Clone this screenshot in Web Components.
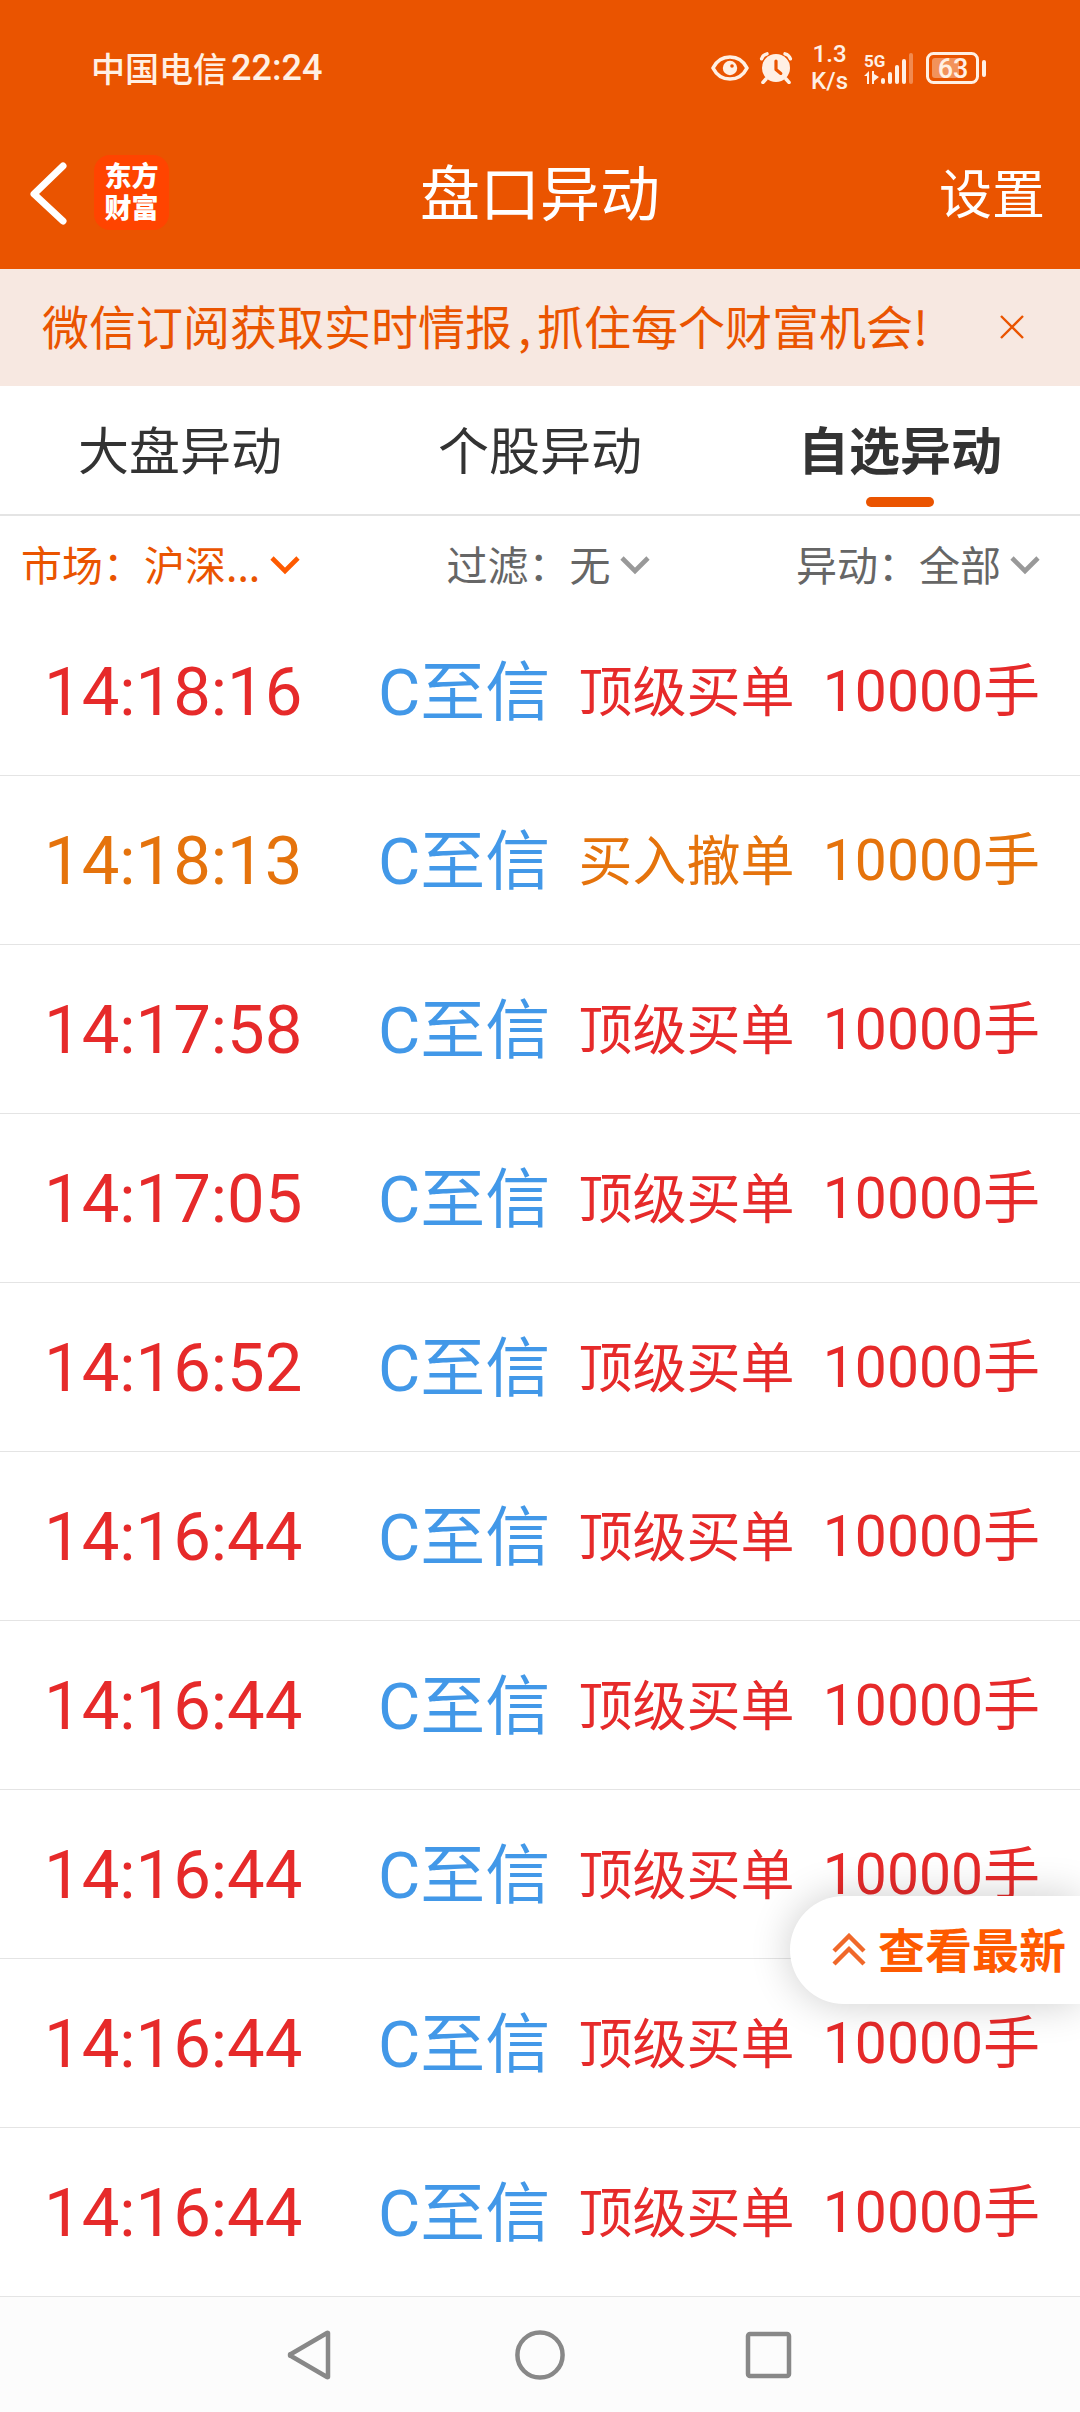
<!DOCTYPE html>
<html lang="zh-CN">
<head>
<meta charset="UTF-8">
<meta name="viewport" content="width=device-width, initial-scale=1">
<title>盘口异动</title>
<style>
    :root {
        --brand: #ea5400;
        --brand-bright: #fe5a00;
        --up: #e62a2a;
        --cancel: #e5730c;
        --link: #4298e8;
        --line: #e4e4e4;
        --text: #333;
        --text-muted: #666;
    }

    body {
        margin: 0;
        background: #fff;
        color: var(--text);
        font-family: "Noto Sans CJK SC", "Noto Sans", sans-serif;
    }
</style>
</head>
<body>
<quote-page>
    <status-bar carrier="中国电信" time="22:24" battery="63"></status-bar>
    <app-header heading="盘口异动"></app-header>
    <promo-banner>微信订阅获取实时情报<span class="comma">,</span>抓住每个财富机会!</promo-banner>
    <tab-bar tabs="大盘异动,个股异动,自选异动" selected="2"></tab-bar>
    <filter-bar>
        <filter-select label="市场：" value="沪深..." active></filter-select>
        <filter-select label="过滤：" value="无"></filter-select>
        <filter-select label="异动：" value="全部"></filter-select>
    </filter-bar>
    <change-list></change-list>
    <latest-button slot="floating">查看最新</latest-button>
    <system-nav slot="footer"></system-nav>
</quote-page>

<script>
class QuotePage extends HTMLElement {
    constructor() {
        super();
        this.attachShadow({ mode: 'open' });
        this.shadowRoot.innerHTML = `
            <style>
                :host {
                    display: flex;
                    flex-direction: column;
                    min-height: 100vh;
                }

                main {
                    position: relative;
                    flex: 1;
                    overflow: hidden;
                }

                ::slotted(latest-button) {
                    position: absolute;
                    right: 0;
                    bottom: 293px;
                }
            </style>
            <main>
                <slot></slot>
                <slot name="floating"></slot>
            </main>
            <slot name="footer"></slot>
        `;
    }
}

class StatusBar extends HTMLElement {
    constructor() {
        super();
        this.attachShadow({ mode: 'open' });
    }

    connectedCallback() {
        this.shadowRoot.innerHTML = `
            <style>
                :host {
                    display: flex;
                    justify-content: space-between;
                    align-items: center;
                    height: 116px;
                    padding: 20px 94px 0 91px;
                    box-sizing: border-box;
                    background: var(--brand);
                    color: #fff0e4;
                    font-size: 34px;
                    line-height: 40px;
                    font-weight: 500;
                }

                .left {
                    display: flex;
                    gap: 4px;
                }

                .time {
                    font-family: Roboto, sans-serif;
                    font-size: 36px;
                }

                .right {
                    display: flex;
                    align-items: center;
                    font-family: Roboto, sans-serif;
                }

                .speed {
                    margin: 0 16px 0 18px;
                    font-size: 24px;
                    line-height: 27px;
                    text-align: center;
                }

                .alarm {
                    margin-left: 10px;
                }

                .battery {
                    margin-left: 10px;
                }

                svg {
                    display: block;
                }
            </style>
            <div class="left">
                <span>${this.getAttribute('carrier')}</span>
                <span class="time">${this.getAttribute('time')}</span>
            </div>
            <div class="right">
                <svg width="38" height="32" viewBox="0 0 38 32" fill="none">
                    <path d="M2 16C6 8 12 5 19 5s13 3 17 11c-4 8-10 11-17 11S6 24 2 16z" stroke="currentColor" stroke-width="3.6" stroke-linejoin="round"/>
                    <circle cx="19" cy="16" r="7.2" fill="currentColor"/>
                    <circle cx="21" cy="14" r="1.8" fill="#ea5400"/>
                </svg>
                <svg class="alarm" width="34" height="32" viewBox="0 0 34 32" fill="none" stroke="currentColor" stroke-linecap="round">
                    <circle cx="17" cy="16" r="14" fill="currentColor" stroke="none"/>
                    <path d="M2.6 6.8C3.4 4.2 5.4 2.4 8 1.8M31.4 6.8C30.6 4.2 28.6 2.4 26 1.8" stroke-width="3.4"/>
                    <path d="M7 27l-3 3.4M27 27l3 3.4" stroke-width="3.6"/>
                    <path d="M17 9v8.4l4.8 4" stroke="#ea5400" stroke-width="3.2" stroke-linejoin="round"/>
                </svg>
                <div class="speed">1.3<br>K/s</div>
                <svg width="52" height="32" viewBox="0 0 52 32" fill="currentColor">
                    <text x="0" y="15" font-size="17" font-weight="700">5G</text>
                    <path d="M0 24l5-5v13H3v-8zM8 19h2v3l5 3-5 4v3H8z"/>
                    <rect x="17" y="26" width="4" height="6" rx="2"/>
                    <rect x="24" y="20" width="4" height="12" rx="2"/>
                    <rect x="31" y="13" width="4" height="19" rx="2"/>
                    <rect x="38" y="7" width="4" height="25" rx="2"/>
                    <rect x="45" y="1" width="4" height="31" rx="2" opacity=".35"/>
                </svg>
                <svg class="battery" width="60" height="34" viewBox="0 0 60 34" fill="none">
                    <rect x="1.5" y="2.5" width="50" height="29" rx="6" stroke="currentColor" stroke-width="3"/>
                    <rect x="6" y="7" width="27" height="20" rx="3" fill="currentColor" opacity=".4"/>
                    <rect x="56" y="9" width="4" height="17" rx="2" fill="currentColor"/>
                    <text x="27" y="27" font-size="27" text-anchor="middle" fill="currentColor">${this.getAttribute('battery')}</text>
                </svg>
            </div>
        `;
    }
}

class AppHeader extends HTMLElement {
    constructor() {
        super();
        this.attachShadow({ mode: 'open' });
    }

    connectedCallback() {
        this.shadowRoot.innerHTML = `
            <style>
                :host {
                    display: grid;
                    grid-template-columns: 1fr auto 1fr;
                    align-items: center;
                    height: 153px;
                    padding: 0 28px;
                    box-sizing: border-box;
                    background: var(--brand);
                    color: #fff;
                }

                .left {
                    display: flex;
                    align-items: center;
                    gap: 26px;
                }

                button {
                    padding: 0;
                    border: 0;
                    background: none;
                    color: inherit;
                    font: inherit;
                }

                svg {
                    display: block;
                }

                .logo {
                    display: flex;
                    flex-direction: column;
                    align-items: center;
                    justify-content: center;
                    width: 75px;
                    height: 75px;
                    border-radius: 16px;
                    background: #ff4400;
                    font-family: Roboto, "Noto Sans CJK SC", sans-serif;
                    font-size: 27px;
                    line-height: 32px;
                    font-weight: 900;
                }

                h1 {
                    margin: 0;
                    padding-bottom: 5px;
                    font-size: 60px;
                    line-height: 72px;
                    font-weight: 400;
                }

                .settings {
                    justify-self: end;
                    padding: 0 7px 4px 0;
                    font-size: 53px;
                    line-height: 72px;
                }
            </style>
            <div class="left">
                <button aria-label="返回">
                    <svg width="40" height="64" viewBox="0 0 40 64" fill="none" stroke="currentColor" stroke-width="7" stroke-linecap="round" stroke-linejoin="round">
                        <path d="M35 5L6 33l29 27"/>
                    </svg>
                </button>
                <div class="logo"><span>东方</span><span>财富</span></div>
            </div>
            <h1>${this.getAttribute('heading')}</h1>
            <button class="settings">设置</button>
        `;
    }
}

class PromoBanner extends HTMLElement {
    constructor() {
        super();
        this.attachShadow({ mode: 'open' });
        this.shadowRoot.innerHTML = `
            <style>
                :host {
                    display: flex;
                    align-items: center;
                    justify-content: space-between;
                    height: 117px;
                    padding: 0 56px 0 42px;
                    box-sizing: border-box;
                    background: #f7e8e1;
                    color: var(--brand);
                    font-size: 47px;
                    line-height: 60px;
                }

                p {
                    margin: 0;
                    padding-bottom: 5px;
                }

                ::slotted(.comma) {
                    margin: 0 6px;
                }

                button {
                    padding: 0 0 2px;
                    border: 0;
                    background: none;
                    color: inherit;
                }

                svg {
                    display: block;
                }
            </style>
            <p><slot></slot></p>
            <button aria-label="关闭">
                <svg width="24" height="24" viewBox="0 0 24 24" stroke="currentColor" stroke-width="2.4">
                    <path d="M1 1l22 22M23 1L1 23"/>
                </svg>
            </button>
        `;

        this.shadowRoot.querySelector('button').addEventListener('click', () => this.remove());
    }
}

class TabBar extends HTMLElement {
    constructor() {
        super();
        this.attachShadow({ mode: 'open' });
    }

    connectedCallback() {
        const tabs = this.getAttribute('tabs').split(',');
        const selected = Number(this.getAttribute('selected'));

        this.shadowRoot.innerHTML = `
            <style>
                :host {
                    display: block;
                    border-bottom: 2px solid var(--line);
                }

                div {
                    display: grid;
                    grid-template-columns: repeat(3, 1fr);
                }

                button {
                    display: flex;
                    flex-direction: column;
                    align-items: center;
                    gap: 19px;
                    padding: 32px 0 7px;
                    border: 0;
                    background: none;
                    color: var(--text);
                    font: inherit;
                    font-size: 51px;
                    line-height: 60px;
                }

                button::after {
                    content: "";
                    width: 68px;
                    height: 10px;
                    border-radius: 5px;
                }

                button[aria-selected="true"] {
                    font-weight: 700;
                }

                button[aria-selected="true"]::after {
                    background: var(--brand);
                }
            </style>
            <div role="tablist">
                ${tabs.map((tab, i) => `<button role="tab" aria-selected="${i === selected}">${tab}</button>`).join('')}
            </div>
        `;

        const buttons = this.shadowRoot.querySelectorAll('button');
        buttons.forEach(button => {
            button.addEventListener('click', () => {
                buttons.forEach(b => b.setAttribute('aria-selected', b === button));
            });
        });
    }
}

class FilterBar extends HTMLElement {
    constructor() {
        super();
        this.attachShadow({ mode: 'open' });
        this.shadowRoot.innerHTML = `
            <style>
                :host {
                    display: flex;
                    justify-content: space-between;
                    align-items: center;
                    height: 91px;
                    padding: 3px 40px 0 21px;
                    box-sizing: border-box;
                }
            </style>
            <slot></slot>
        `;
    }
}

class FilterSelect extends HTMLElement {
    constructor() {
        super();
        this.attachShadow({ mode: 'open' });
    }

    connectedCallback() {
        this.shadowRoot.innerHTML = `
            <style>
                :host {
                    display: flex;
                    align-items: center;
                    color: var(--text-muted);
                    font-size: 41px;
                    line-height: 52px;
                }

                :host([active]) {
                    color: var(--brand);
                }

                select {
                    appearance: none;
                    margin: 0;
                    padding: 0;
                    border: 0;
                    background: none;
                    color: inherit;
                    font: inherit;
                }

                svg {
                    display: block;
                    margin-left: 9px;
                    color: #999;
                    pointer-events: none;
                }

                :host([active]) svg {
                    color: var(--brand-bright);
                }
            </style>
            <label for="choice">${this.getAttribute('label')}</label>
            <select id="choice"><option>${this.getAttribute('value')}</option></select>
            <svg width="30" height="24" viewBox="0 0 30 24" fill="none" stroke="currentColor" stroke-width="4.6">
                <path d="M2 7l13 13L28 7"/>
            </svg>
        `;
    }
}

class ChangeList extends HTMLElement {
    constructor() {
        super();
        this.attachShadow({ mode: 'open' });
        this.rows = [
            { time: '14:18:16', type: '顶级买单' },
            { time: '14:18:13', type: '买入撤单', cancel: true },
            { time: '14:17:58', type: '顶级买单' },
            { time: '14:17:05', type: '顶级买单' },
            { time: '14:16:52', type: '顶级买单' },
            { time: '14:16:44', type: '顶级买单' },
            { time: '14:16:44', type: '顶级买单' },
            { time: '14:16:44', type: '顶级买单' },
            { time: '14:16:44', type: '顶级买单' },
            { time: '14:16:44', type: '顶级买单' }
        ];
    }

    connectedCallback() {
        this.shadowRoot.innerHTML = `
            <style>
                :host {
                    display: block;
                    font-family: Roboto, "Noto Sans CJK SC", sans-serif;
                }

                table {
                    width: 100%;
                    table-layout: fixed;
                    border-collapse: separate;
                    border-spacing: 0;
                    line-height: 80px;
                }

                td {
                    height: 169px;
                    padding: 2px 0 0;
                    box-sizing: border-box;
                    border-bottom: 1px solid var(--line);
                    color: var(--up);
                    white-space: nowrap;
                }

                .cancel td {
                    color: var(--cancel);
                }

                td.time {
                    width: 35%;
                    padding-left: 44px;
                    font-size: 67px;
                }

                td.name {
                    width: 18%;
                    padding-top: 3px;
                    font-size: 65px;
                }

                td.type {
                    width: 22%;
                    padding: 5px 0 0 6px;
                    font-size: 54px;
                }

                td.amount {
                    padding-right: 40px;
                    font-size: 57px;
                    text-align: right;
                }

                a {
                    color: var(--link);
                    text-decoration: none;
                }
            </style>
            <table>
                <tbody>
                    ${this.rows.map(row => `
                        <tr class="${row.cancel ? 'cancel' : ''}">
                            <td class="time">${row.time}</td>
                            <td class="name"><a href="#">C至信</a></td>
                            <td class="type">${row.type}</td>
                            <td class="amount">10000手</td>
                        </tr>
                    `).join('')}
                </tbody>
            </table>
        `;
    }
}

class LatestButton extends HTMLElement {
    constructor() {
        super();
        this.attachShadow({ mode: 'open' });
        this.shadowRoot.innerHTML = `
            <style>
                :host {
                    display: block;
                }

                button {
                    display: flex;
                    align-items: center;
                    gap: 12px;
                    height: 108px;
                    padding: 0 14px 0 42px;
                    border: 0;
                    border-radius: 54px 0 0 54px;
                    background: #fff;
                    box-shadow: 0 0 40px rgba(0, 0, 0, 0.2);
                    color: var(--brand-bright);
                    font: inherit;
                    font-size: 47px;
                    line-height: 60px;
                    font-weight: 700;
                }

                span {
                    padding-bottom: 5px;
                }
            </style>
            <button>
                <svg width="34" height="34" viewBox="0 0 34 34" fill="none" stroke="#f0682a" stroke-width="4.4">
                    <path d="M2 18L17 3l15 15M2 31l15-15 15 15"/>
                </svg>
                <span><slot></slot></span>
            </button>
        `;
    }
}

class SystemNav extends HTMLElement {
    constructor() {
        super();
        this.attachShadow({ mode: 'open' });
        this.shadowRoot.innerHTML = `
            <style>
                :host {
                    display: flex;
                    justify-content: center;
                    align-items: center;
                    gap: 180px;
                    height: 115px;
                    background: #fcfcfc;
                    color: #888;
                }

                button {
                    padding: 0;
                    border: 0;
                    background: none;
                    color: inherit;
                }

                svg {
                    display: block;
                    fill: none;
                    stroke: currentColor;
                    stroke-width: 4.5;
                    stroke-linejoin: round;
                }
            </style>
            <button aria-label="返回"><svg width="50" height="50" viewBox="0 0 50 50"><path d="M43 3v44a1 1 0 0 1-1 0L6 26a1 1 0 0 1 0-2L42 3a1 1 0 0 1 1 0z"/></svg></button>
            <button aria-label="主屏幕"><svg width="50" height="50" viewBox="0 0 50 50"><circle cx="25" cy="25" r="22.6"/></svg></button>
            <button aria-label="最近任务"><svg width="50" height="50" viewBox="0 0 50 50"><rect x="3" y="4" width="41" height="42" rx="2"/></svg></button>
        `;
    }
}

customElements.define('quote-page', QuotePage);
customElements.define('status-bar', StatusBar);
customElements.define('app-header', AppHeader);
customElements.define('promo-banner', PromoBanner);
customElements.define('tab-bar', TabBar);
customElements.define('filter-bar', FilterBar);
customElements.define('filter-select', FilterSelect);
customElements.define('change-list', ChangeList);
customElements.define('latest-button', LatestButton);
customElements.define('system-nav', SystemNav);
</script>
</body>
</html>
